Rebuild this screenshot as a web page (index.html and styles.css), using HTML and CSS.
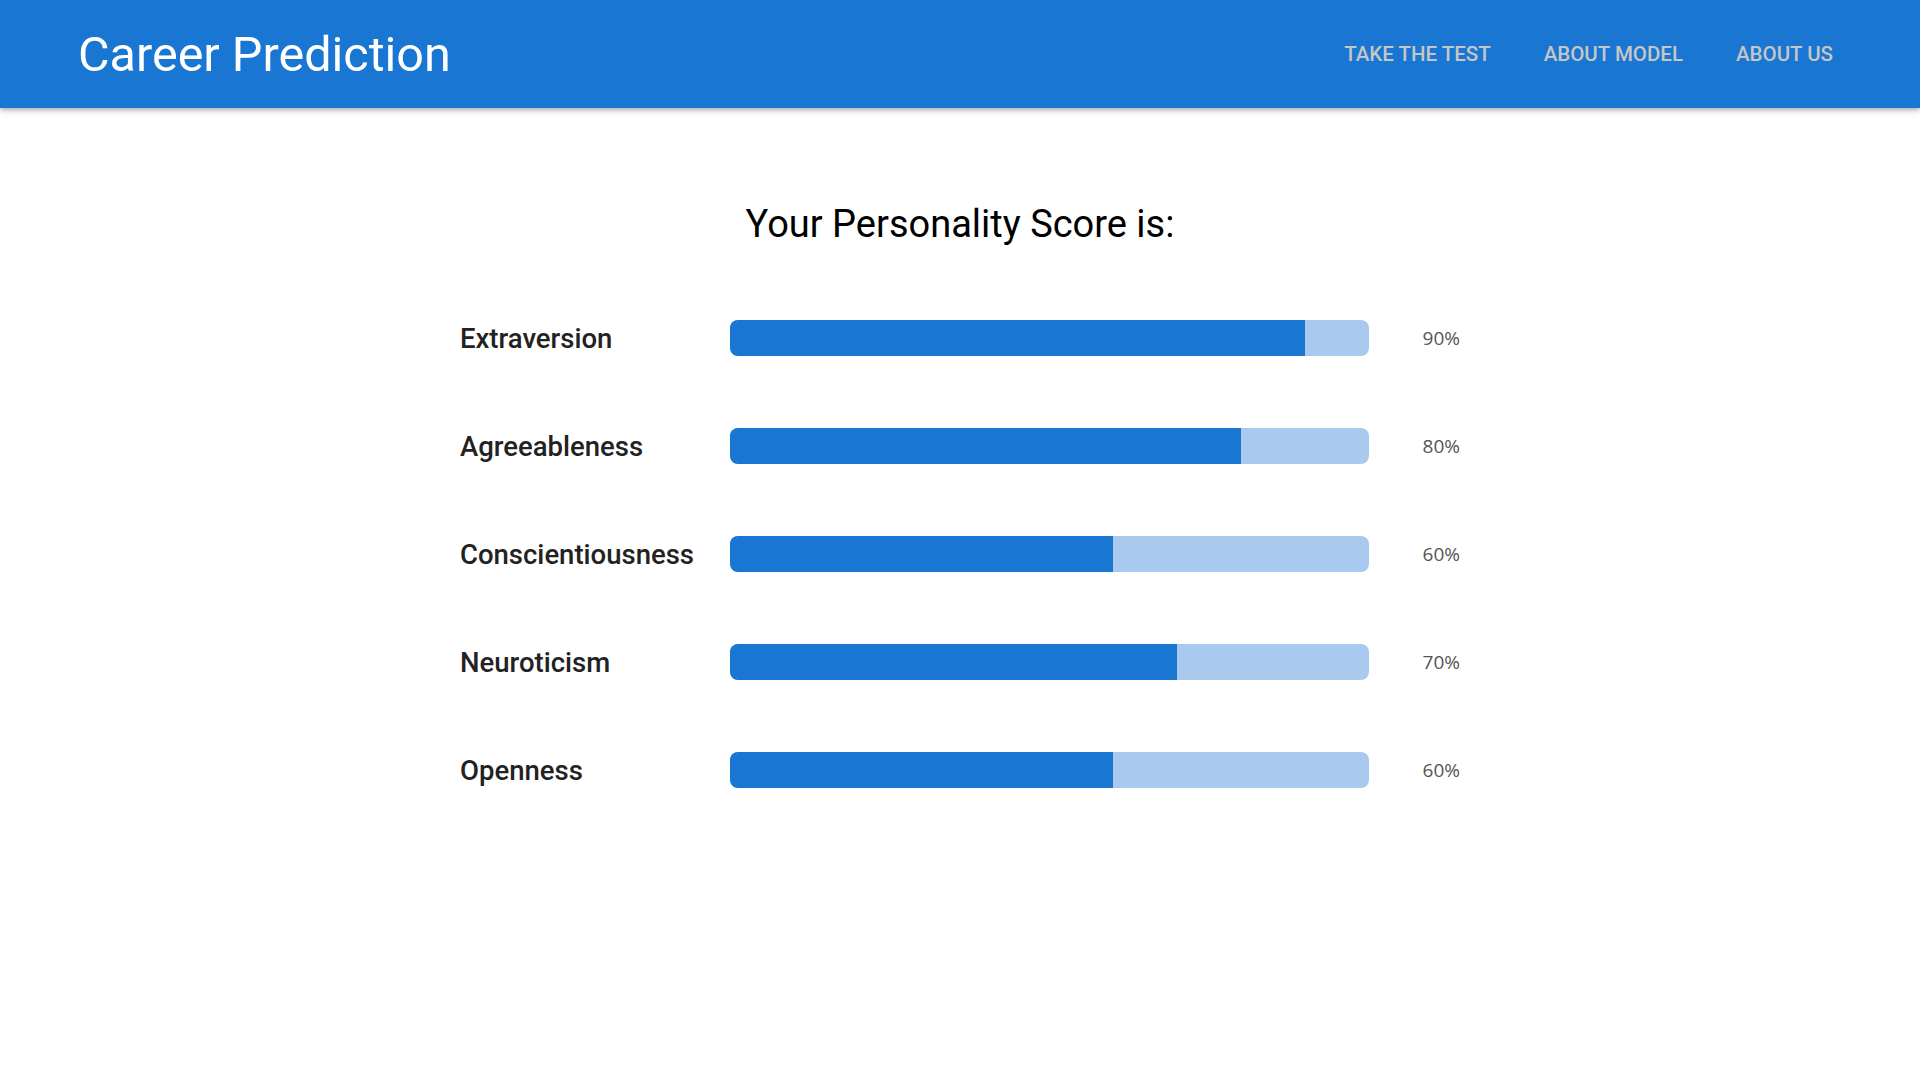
FILE: index.html
```html
<!DOCTYPE html>
<html lang="en">
<head>
<meta charset="utf-8">
<title>Career Prediction</title>
<link rel="stylesheet" href="styles.css">
</head>
<body>
<header class="nav">
  <div class="brand">Career Prediction</div>
  <nav class="links">
    <a href="#">TAKE THE TEST</a>
    <a href="#">ABOUT MODEL</a>
    <a href="#">ABOUT US</a>
  </nav>
</header>
<main class="main">
  <h1 class="heading">Your Personality Score is:</h1>
  <div class="scores">
    <div class="row"><div class="label">Extraversion</div><div class="track"><div class="fill" style="width:90%"></div></div><div class="pct">90%</div></div>
    <div class="row"><div class="label">Agreeableness</div><div class="track"><div class="fill" style="width:80%"></div></div><div class="pct">80%</div></div>
    <div class="row"><div class="label">Conscientiousness</div><div class="track"><div class="fill" style="width:60%"></div></div><div class="pct">60%</div></div>
    <div class="row"><div class="label">Neuroticism</div><div class="track"><div class="fill" style="width:70%"></div></div><div class="pct">70%</div></div>
    <div class="row"><div class="label">Openness</div><div class="track"><div class="fill" style="width:60%"></div></div><div class="pct">60%</div></div>
  </div>
</main>
</body>
</html>
```
FILE: styles.css
```css
* { box-sizing: border-box; }
html, body { margin: 0; padding: 0; background: #fff; }
body { font-family: Roboto, "Liberation Sans", sans-serif; }
.nav {
  height: 108px;
  background: #1976d2;
  display: flex;
  align-items: center;
  justify-content: space-between;
  padding: 0 87px 0 78px;
  box-shadow: 0 2px 4px rgba(0,0,0,0.22), 0 3px 8px rgba(0,0,0,0.12);
  position: relative;
  z-index: 1;
}
.brand {
  color: #fff;
  font-size: 48.5px;
  font-weight: 400;
}
.links { display: flex; gap: 53px; }
.links a {
  color: #c6c6c6;
  text-decoration: none;
  font-size: 20.5px;
  font-weight: 500;
  letter-spacing: 0;
}
.main { padding-top: 88px; }
.heading {
  margin: 0;
  text-align: center;
  font-size: 38px;
  font-weight: 400;
  color: #000;
  line-height: 56px;
}
.scores {
  width: 1000px;
  margin: 32px auto 0;
  display: flex;
  flex-direction: column;
}
.row {
  display: flex;
  align-items: center;
  height: 108px;
}
.label {
  width: 270px;
  font-size: 27.5px;
  font-weight: 500;
  color: #222;
}
.track {
  width: 639px;
  height: 36px;
  background: #a9caee;
  border-radius: 8px;
  overflow: hidden;
}
.fill { height: 100%; background: #1976d2; }
.pct {
  margin-left: 54px;
  font-family: "Open Sans", sans-serif;
  font-size: 19px;
  color: #555;
}
```
